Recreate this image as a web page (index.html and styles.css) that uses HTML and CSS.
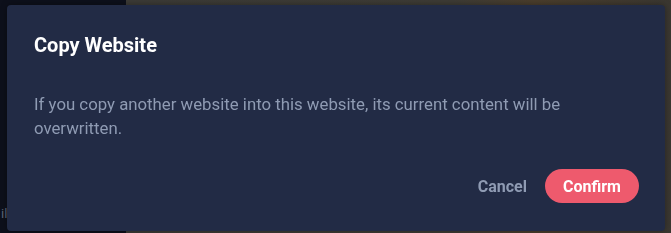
FILE: index.html
```html
<!DOCTYPE html>
<html lang="en">
<head>
    <meta charset="UTF-8">
    <meta name="viewport" content="width=device-width, initial-scale=1.0">
    <title>Copy Website</title>
    <link rel="stylesheet" href="styles.css">
</head>
<body>
    <div class="page">
        <div class="sidebar">
            <span class="sidebar-label">il</span>
        </div>
        <div class="preview"></div>
    </div>

    <div class="backdrop">
        <div class="dialog">
            <h2 class="dialog-title">Copy Website</h2>
            <p class="dialog-text">If you copy another website into this website, its current content will be overwritten.</p>
            <div class="dialog-actions">
                <button class="btn btn-cancel">Cancel</button>
                <button class="btn btn-confirm">Confirm</button>
            </div>
        </div>
    </div>
</body>
</html>
```

FILE: styles.css
```css
body {
    margin: 0;
    font-family: Roboto, "Liberation Sans", sans-serif;
    background: #0e111c;
    height: 233px;
    overflow: hidden;
}

.page {
    display: flex;
    height: 100%;
}

.sidebar {
    width: 126px;
    background: #0d101b;
    display: flex;
    align-items: flex-end;
    padding-bottom: 10px;
    box-sizing: border-box;
}

.sidebar-label {
    color: #5c6477;
    font-size: 13px;
    margin-left: 1px;
    margin-bottom: 2px;
}

.preview {
    flex: 1;
    background: linear-gradient(90deg, #3b3a36 0%, #3d3b35 60%, #4a3d2c 75%, #3a3731 100%);
}

.backdrop {
    position: fixed;
    inset: 0;
    padding: 5px 6px 2px 7px;
    box-sizing: border-box;
}

.dialog {
    background: #222b45;
    border-radius: 4px;
    height: 226px;
    padding: 28px 26px 28px 27px;
    box-sizing: border-box;
    display: flex;
    flex-direction: column;
    box-shadow: 0 0 6px rgba(0, 0, 0, 0.35);
}

.dialog-title {
    margin: 0;
    color: #ffffff;
    font-size: 20px;
    font-weight: 700;
    line-height: 24px;
}

.dialog-text {
    margin: 35px 0 0 0;
    color: #8f9bb3;
    font-size: 16.8px;
    line-height: 24px;
}

.dialog-actions {
    margin-top: auto;
    display: flex;
    justify-content: flex-end;
    align-items: center;
    gap: 18px;
}

.btn {
    font-family: Roboto, "Liberation Sans", sans-serif;
    font-size: 16px;
    font-weight: 700;
    border: none;
    cursor: pointer;
    height: 34px;
    border-radius: 17px;
    padding: 0 18px;
}

.btn-cancel {
    background: transparent;
    color: #8f9bb3;
    padding: 0;
}

.btn-confirm {
    background: #ee5a6d;
    color: #ffffff;
    width: 94px;
}
```
